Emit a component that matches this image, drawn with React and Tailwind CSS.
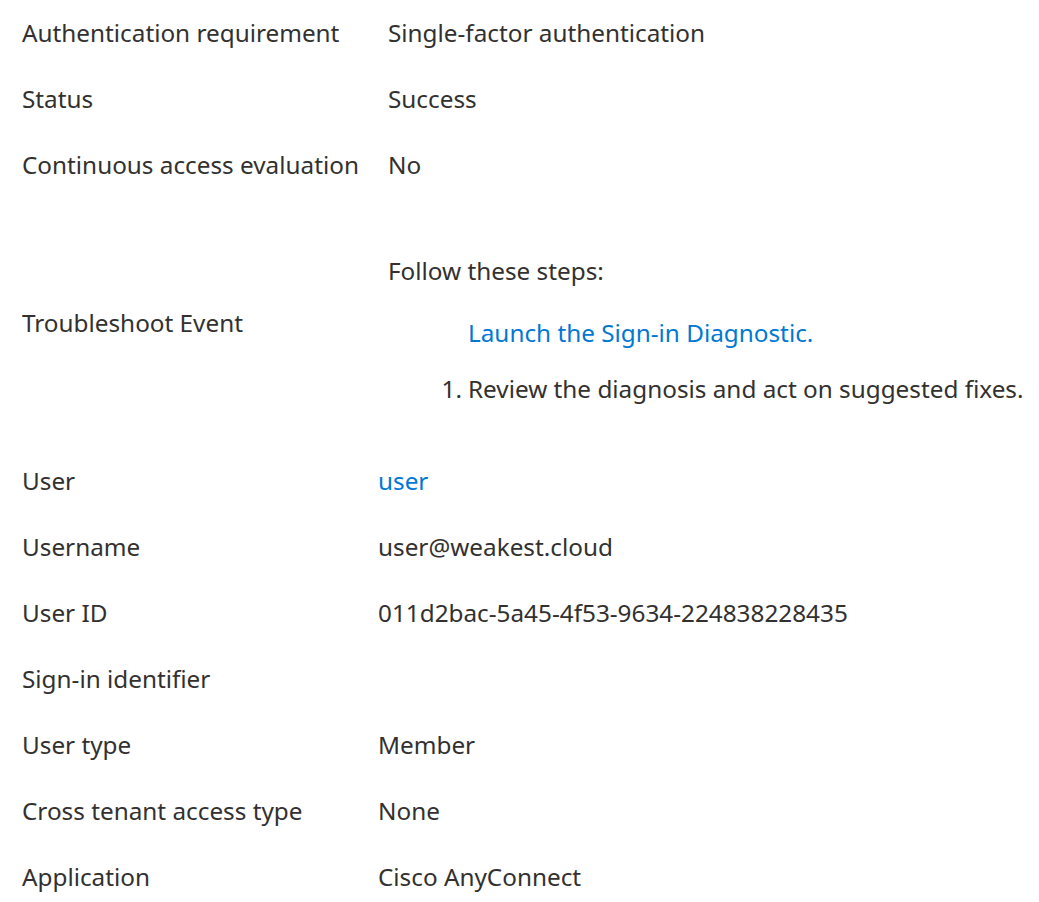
import React from 'react';

const topRows = [
  ['Authentication requirement', 'Single-factor authentication'],
  ['Status', 'Success'],
  ['Continuous access evaluation', 'No'],
];

const userRows = [
  ['User', 'user', true],
  ['Username', 'user@weakest.cloud'],
  ['User ID', '011d2bac-5a45-4f53-9634-224838228435'],
  ['Sign-in identifier', ''],
  ['User type', 'Member'],
  ['Cross tenant access type', 'None'],
  ['Application', 'Cisco AnyConnect'],
];

const Row = ({ label, value, link, labelWidth }) => (
  <div className="flex items-center h-[66px]">
    <div className={`${labelWidth} pl-[22px] shrink-0 whitespace-nowrap`}>{label}</div>
    <div className={`whitespace-nowrap ${link ? 'text-[#0078d4]' : ''}`}>{value}</div>
  </div>
);

export default function App() {
  return (
    <div
      className="bg-white text-[#323130] text-[24.3px] w-[1039px] h-[902px] overflow-hidden"
      style={{ fontFamily: '"Noto Sans", "Open Sans", sans-serif' }}
    >
      {topRows.map(([label, value]) => (
        <Row key={label} label={label} value={value} labelWidth="w-[388px]" />
      ))}

      {/* Troubleshoot */}
      <div className="flex items-center h-[250px]">
        <div className="w-[388px] pl-[22px] shrink-0 whitespace-nowrap">Troubleshoot Event</div>
        <div className="self-stretch pt-[55px] leading-[36px]">
          <div className="h-[36px] whitespace-nowrap">Follow these steps:</div>
          <div className="mt-[26px] h-[36px] pl-[80px] whitespace-nowrap text-[#0078d4]">
            Launch the Sign-in Diagnostic.
          </div>
          <div className="mt-[20px] h-[36px] flex whitespace-nowrap">
            <span className="w-[80px] text-right pr-[6px]">1.</span>
            <span>Review the diagnosis and act on suggested fixes.</span>
          </div>
        </div>
      </div>

      {userRows.map(([label, value, link]) => (
        <Row key={label} label={label} value={value} link={link} labelWidth="w-[378px]" />
      ))}
    </div>
  );
}
